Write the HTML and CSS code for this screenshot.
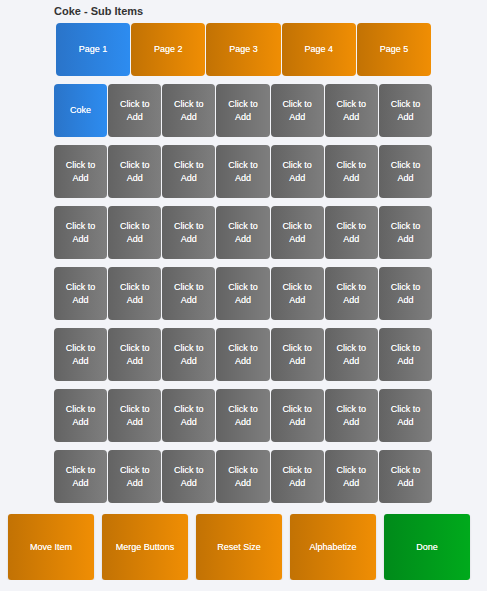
FILE: index.html
```html
<!DOCTYPE html>
<html lang="en">
  <head>
    <meta charset="UTF-8" />
    <meta name="viewport" content="width=device-width, initial-scale=1.0" />
    <title>Coke - Sub Items</title>
    <link rel="stylesheet" href="styles.css">
  </head>
  <body>
    <div class="editor">
      <h1 class="title">Coke - Sub Items</h1>

      <div class="pages">
        <button class="page active">Page 1</button>
        <button class="page">Page 2</button>
        <button class="page">Page 3</button>
        <button class="page">Page 4</button>
        <button class="page">Page 5</button>
      </div>

      <div class="grid" id="grid">
        <button class="cell active">Coke</button>
      </div>
    </div>

    <div class="actions">
      <button class="action">Move Item</button>
      <button class="action">Merge Buttons</button>
      <button class="action">Reset Size</button>
      <button class="action">Alphabetize</button>
      <button class="action done">Done</button>
    </div>

    <script>
      // fill the rest of the 7x7 grid with empty slots
      const grid = document.getElementById("grid");
      for (let i = 1; i < 49; i++) {
        const cell = document.createElement("button");
        cell.className = "cell";
        cell.innerHTML = "Click to<br>Add";
        grid.appendChild(cell);
      }
    </script>
  </body>
</html>
```

FILE: styles.css
```css
body {
  margin: 0;
  background-color: #f3f4f8;
  font-family: "Liberation Sans", Arial, sans-serif;
}

button {
  font-family: inherit;
  font-size: 9px;
  line-height: 13px;
  color: white;
  border: none;
  padding: 0;
  cursor: pointer;
  text-shadow: 0 0 0.4px rgba(255, 255, 255, 0.8);
}

.editor {
  width: 379px;
  margin: 0 auto;
  padding-top: 5px;
}

.title {
  margin: 0 0 6px;
  font-size: 11px;
  font-weight: bold;
  color: #333;
}

.pages {
  display: flex;
  gap: 1px;
  padding: 0 2px;
}

.page {
  flex: 1;
  height: 53px;
  border-radius: 4px;
  background: linear-gradient(to right, #c27204, #f08e04);
}

.page.active,
.cell.active {
  background: linear-gradient(to right, #2a74c9, #2d8cf0);
}

.grid {
  display: grid;
  width: 378px;
  grid-template-columns: repeat(7, 1fr);
  grid-auto-rows: 53px;
  column-gap: 1px;
  row-gap: 8px;
  margin-top: 8px;
}

.cell {
  border-radius: 4px;
  background: linear-gradient(to right, #636363, #7e7e7e);
}

.actions {
  display: flex;
  gap: 8px;
  padding: 11px 8px 0;
}

.action {
  width: 86px;
  height: 66px;
  border-radius: 3px;
  background: linear-gradient(to right, #c27204, #f08e04);
  box-shadow: 0 1px 2px rgba(0, 0, 0, 0.15);
}

.action.done {
  background: linear-gradient(to right, #008a1a, #00aa1c);
}
```
